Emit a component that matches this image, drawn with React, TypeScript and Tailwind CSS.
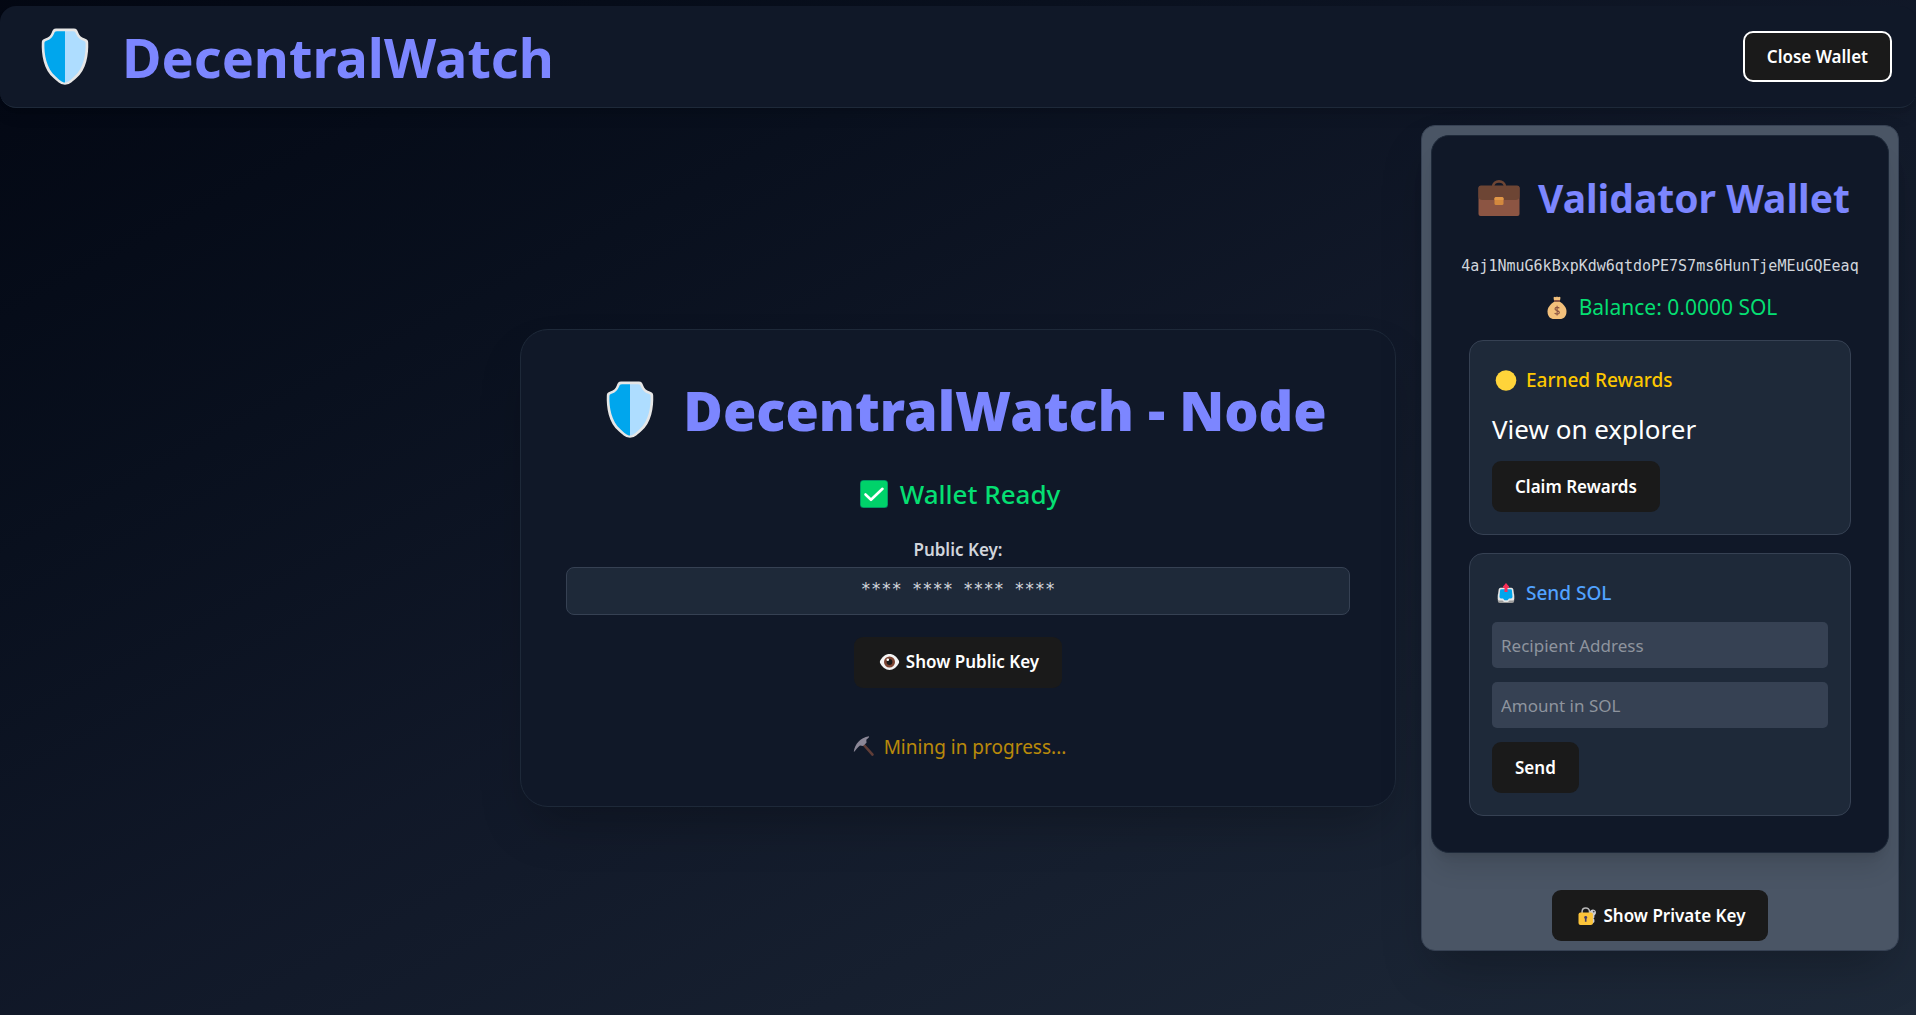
import React, { useId } from "react";

type IconProps = { className: string };

function Shield({ className }: IconProps) {
  return (
    <svg viewBox="0 0 47 57" className={className} aria-hidden="true">
      <path
        d="M14.5 0.5H32.5C35 0.5 35.8 2 36.6 4.2C37.8 7.6 39.6 9.4 43.2 10.4C45.8 11.2 46.6 12.2 46.7 14.5C47.2 26 45 42 34.5 50.5C29.5 55 27 56.7 23.5 56.7C20 56.7 17.500 55 12.5 50.500C2 42 -0.2 26 0.3 14.5C0.4 12.2 1.2 11.2 3.800 10.4C7.4 9.4 9.2 7.6 10.4 4.2C11.2 2 12 0.5 14.5 0.500Z"
        fill="#e6e6e6"
      />
      <path d="M23.500 3.200H15.500C13.600 3.200 13.200 4 12.600 5.600C11.200 9.400 8.800 11.700 5 12.800C3.300 13.300 3 13.800 2.900 15.500C2.600 26 4.800 40.500 14.200 48.500C18 52 20.500 54.500 23.500 54.500Z" fill="#00a6ed" />
      <path d="M23.500 3.200H31.500C33.400 3.200 33.800 4 34.400 5.600C35.800 9.400 38.200 11.700 42 12.800C43.700 13.300 44 13.800 44.100 15.500C44.400 26 42.200 40.500 32.800 48.500C29 52 26.500 54.500 23.500 54.500Z" fill="#aeddff" />
    </svg>
  );
}

function Briefcase({ className }: IconProps) {
  return (
    <svg viewBox="0 0 41 36" className={className} aria-hidden="true">
      <path d="M14.500 7C14.500 -0.500 26.500 -0.500 26.500 7" fill="none" stroke="#6d4534" strokeWidth="2.600" />
      <rect y="6" width="41" height="30" rx="2" fill="#8c5543" />
      <path d="M2.500 5.500H38.500Q41 5.500 41 8V16Q41 20 37 20H4Q0 20 0 16V8Q0 5.500 2.500 5.500Z" fill="#6d4534" />
      <rect x="16" y="17" width="9" height="8" rx="1.500" fill="#d3883e" />
      <path d="M17.500 17H23.500Q25 17 25 18.500V20H16V18.500Q16 17 17.500 17Z" fill="#e19747" />
    </svg>
  );
}

function MoneyBag({ className }: IconProps) {
  return (
    <svg viewBox="0 0 19 23" className={className} aria-hidden="true">
      <path d="M6.500 4.500L6 1.500Q7.500 0.300 8.500 1.300Q9.500 -0.500 10.500 1.300Q12 0.300 13 1.500L12.500 4.500Z" fill="#f3c07b" />
      <path d="M7 5.500H12C16 8 19 11.500 19 15.500C19 20.500 16 23 12.500 23H6.500C3 23 0 20.500 0 15.500C0 11.500 3 8 7 5.500Z" fill="#f3c07b" />
      <rect x="6.500" y="3.900" width="6" height="1.900" rx="0.900" fill="#8c5543" />
      <path d="M11.800 12.200C11.200 11 7.500 10.900 7.500 12.900C7.500 15 11.900 14.200 11.900 16.500C11.900 18.600 7.800 18.500 7.200 17M9.600 9.800V19.600" fill="none" stroke="#8c5543" strokeWidth="1.100" />
    </svg>
  );
}

function CheckBadge({ className }: IconProps) {
  return (
    <svg viewBox="0 0 28 28" className={className} aria-hidden="true">
      <rect width="28" height="28" rx="3.500" fill="#008463" />
      <rect x="0.700" y="0.700" width="26.600" height="26.600" rx="3" fill="#00d26a" />
      <path d="M5.500 14.500L11 19.800L22.500 8.800" fill="none" stroke="#fff" strokeWidth="2.600" strokeLinecap="round" strokeLinejoin="round" />
    </svg>
  );
}

function Eye({ className }: IconProps) {
  const clip = useId();
  return (
    <svg viewBox="0 0 20 16" className={className} aria-hidden="true">
      <defs>
        <clipPath id={clip}>
          <path d="M0 8C5 -2.600 15 -2.600 20 8C15 18.600 5 18.600 0 8Z" />
        </clipPath>
      </defs>
      <g clipPath={`url(#${clip})`}>
        <rect width="20" height="16" fill="#f4f4f4" />
        <circle cx="10" cy="8" r="5.500" fill="#7d4533" />
        <circle cx="10" cy="8" r="2.900" fill="#1c1c1c" />
        <circle cx="8.300" cy="5.800" r="1.300" fill="#fff" />
      </g>
    </svg>
  );
}

function Pickaxe({ className }: IconProps) {
  return (
    <svg viewBox="0 0 21 21" className={className} aria-hidden="true">
      <path d="M10 8.500L19 18.600" stroke="#7b4a3d" strokeWidth="2.600" strokeLinecap="round" />
      <path d="M0.300 15.500C1.500 8 6.500 2 15.500 0.300C15.800 0.900 15.300 1.600 14.500 2.300L12.800 3.800L13 6.800L9.500 10L6.500 9.500C4 11.500 2.500 13.600 1.200 15.300C0.900 15.800 0.500 15.900 0.300 15.500Z" fill="#b4acbc" />
    </svg>
  );
}

function Coin({ className }: IconProps) {
  return (
    <svg viewBox="0 0 21 21" className={className} aria-hidden="true">
      <circle cx="10.500" cy="10.500" r="10.300" fill="#ffd43a" />
    </svg>
  );
}

function Outbox({ className }: IconProps) {
  return (
    <svg viewBox="0 0 17 20" className={className} aria-hidden="true">
      <path d="M0.300 11H16.700V18Q16.700 20 14.700 20H2.300Q0.300 20 0.300 18Z" fill="#9b9b9b" />
      <path d="M3 4.800H14Q15.500 4.800 15.800 6.300L16.700 13V16Q16.700 17.500 15.200 17.500H12L10.500 19H6.500L5 17.500H1.800Q0.300 17.500 0.300 16V13L1.200 6.300Q1.500 4.800 3 4.800Z" fill="#e6e6e6" />
      <path d="M3.500 6.300H13.500Q14.300 6.300 14.400 7.200L15 13.500Q15 15.500 13.500 15.500H11.500L10 17.200H7L5.500 15.500H3.500Q2 15.500 2 13.500L2.600 7.200Q2.700 6.300 3.500 6.300Z" fill="#00a6ed" />
      <path d="M8.500 0L11.500 3.600V4.800H10V9H7V4.800H5.500V3.600Z" fill="#fb2f58" />
    </svg>
  );
}

function LockWithKey({ className }: IconProps) {
  return (
    <svg viewBox="0 0 18 18" className={className} aria-hidden="true">
      <path d="M3.600 7V4.600C3.600 -0.300 11 -0.300 11 4.600V7" fill="none" stroke="#b8b8b8" strokeWidth="1.500" />
      <path d="M11.300 5.500A3.100 3.100 0 1 1 16.800 7.600L15.900 8.500V10.500L15 11.500L15.900 12.500V15L14 16.800H12.500V8Z" fill="#cfcfd2" />
      <circle cx="15.200" cy="4.600" r="0.900" fill="#4b4b50" />
      <rect y="5.400" width="14.400" height="12.600" rx="2" fill="#fcc43a" />
      <path d="M7.200 9A1.500 1.500 0 0 1 8 11.800V14.700H6.400V11.800A1.500 1.500 0 0 1 7.200 9Z" fill="#433b6b" />
    </svg>
  );
}

type ButtonProps = { children: React.ReactNode; outlined?: boolean };

function Button({ children, outlined = false }: ButtonProps) {
  return (
    <button
      type="button"
      className={
        outlined
          ? "flex h-[51px] items-center gap-1 rounded-[10px] border-2 border-white bg-[#1a1a1a] px-[22px] text-[17px] font-semibold text-white"
          : "flex h-[51px] items-center gap-1 rounded-[9px] bg-[#1a1a1a] px-[23px] text-[17px] font-semibold text-white"
      }
    >
      {children}
    </button>
  );
}

function Header() {
  return (
    <header className="flex h-[102px] items-center justify-between rounded-2xl border-b border-gray-800 bg-gray-900 px-6 shadow-lg">
      <div className="flex items-center gap-4">
        <Shield className="h-[57px] w-[82px]" />
        <span className="text-[54px] leading-[72px] font-bold text-indigo-400">DecentralWatch</span>
      </div>
      <Button outlined>Close Wallet</Button>
    </header>
  );
}

function NodeCard() {
  return (
    <section className="col-start-2 flex flex-col items-center self-center rounded-[28px] border border-gray-800 bg-gray-900 px-[45px] py-11 shadow-2xl">
      <h1 className="flex items-center gap-3 text-[54px] leading-[72px] font-black whitespace-nowrap text-indigo-400">
        <Shield className="h-[57px] w-[82px]" />
        DecentralWatch - Node
      </h1>
      <p className="mt-7 flex items-center gap-2 text-[26px] leading-10 font-medium text-[#05df72]">
        <CheckBadge className="h-7 w-9" />
        Wallet Ready
      </p>
      <p className="mt-6 text-[17px] leading-6 font-semibold text-gray-300">Public Key:</p>
      <div className="mt-[5px] w-full rounded-lg border border-gray-700 bg-gray-800 px-2 pt-[9px] pb-[13px] text-center font-['DejaVu_Sans_Mono',monospace] text-[17px] leading-6 text-gray-300">
        **** **** **** ****
      </div>
      <div className="mt-[22px]">
        <Button>
          <Eye className="h-4 w-[25px]" />
          Show Public Key
        </Button>
      </div>
      <p className="mt-11 flex items-center gap-1.5 text-[19px] leading-[30px] text-[#f0b100] opacity-75">
        <Pickaxe className="h-[21px] w-7" />
        Mining in progress...
      </p>
    </section>
  );
}

const fieldClass =
  "h-[46px] w-full rounded-[5px] bg-gray-700 px-[9px] text-[17px] text-white placeholder:text-[#8e949e]";

function WalletPanel() {
  return (
    <aside className="col-start-3 mt-[5px] mr-[17px] w-[478px] self-start justify-self-end rounded-[14px] border border-gray-700 bg-gray-600 p-[9px] shadow-2xl">
      <section className="rounded-[18px] border border-gray-800 bg-gray-900 px-[37px] pt-8 pb-9 shadow-xl">
        <h2 className="flex items-center justify-center gap-2.5 text-[39px] leading-[60px] font-bold whitespace-nowrap text-indigo-400">
          <Briefcase className="h-9 w-[58px]" />
          Validator Wallet
        </h2>
        <p className="mt-[26px] flex justify-center font-['DejaVu_Sans_Mono',monospace] text-[15px] leading-6 whitespace-nowrap text-gray-300">
          4aj1NmuG6kBxpKdw6qtdoPE7S7ms6HunTjeMEuGQEeaq
        </p>
        <p className="mt-[14px] flex items-center justify-center gap-2 text-[21px] leading-[30px] text-[#05df72]">
          <MoneyBag className="h-[23px] w-7" />
          Balance: 0.0000 SOL
        </p>

        <section className="mt-[18px] rounded-[14px] border border-gray-700 bg-gray-800 p-[22px]">
          <h3 className="flex items-center gap-1.5 text-[19px] leading-[34px] font-medium text-[#fdc700]">
            <Coin className="h-[21px] w-7" />
            Earned Rewards
          </h3>
          <a href="#explorer" className="mt-3 block text-[26px] leading-10 text-white">
            View on explorer
          </a>
          <div className="mt-3">
            <Button>Claim Rewards</Button>
          </div>
        </section>

        <form className="mt-[18px] rounded-[14px] border border-gray-700 bg-gray-800 p-[22px]">
          <h3 className="flex items-center gap-1.5 text-[19px] leading-[34px] font-medium text-[#51a2ff]">
            <Outbox className="h-5 w-7" />
            Send SOL
          </h3>
          <div className="mt-3 flex flex-col items-start gap-[14px]">
            <input aria-label="Recipient Address" type="text" placeholder="Recipient Address" className={fieldClass} />
            <input aria-label="Amount in SOL" type="text" placeholder="Amount in SOL" className={fieldClass} />
            <Button>Send</Button>
          </div>
        </form>
      </section>
      <div className="mt-[37px] flex justify-center">
        <Button>
          <LockWithKey className="h-[18px] w-[25px]" />
          Show Private Key
        </Button>
      </div>
    </aside>
  );
}

export default function App() {
  return (
    <div className="flex min-h-screen flex-col bg-linear-to-br from-gray-950 via-gray-900 to-gray-800 pt-1.5 font-['Noto_Sans',sans-serif] text-white">
      <Header />
      <main className="grid flex-1 grid-cols-[minmax(0,1fr)_minmax(0,876px)_minmax(495px,1fr)] pt-3">
        <NodeCard />
        <WalletPanel />
      </main>
    </div>
  );
}
